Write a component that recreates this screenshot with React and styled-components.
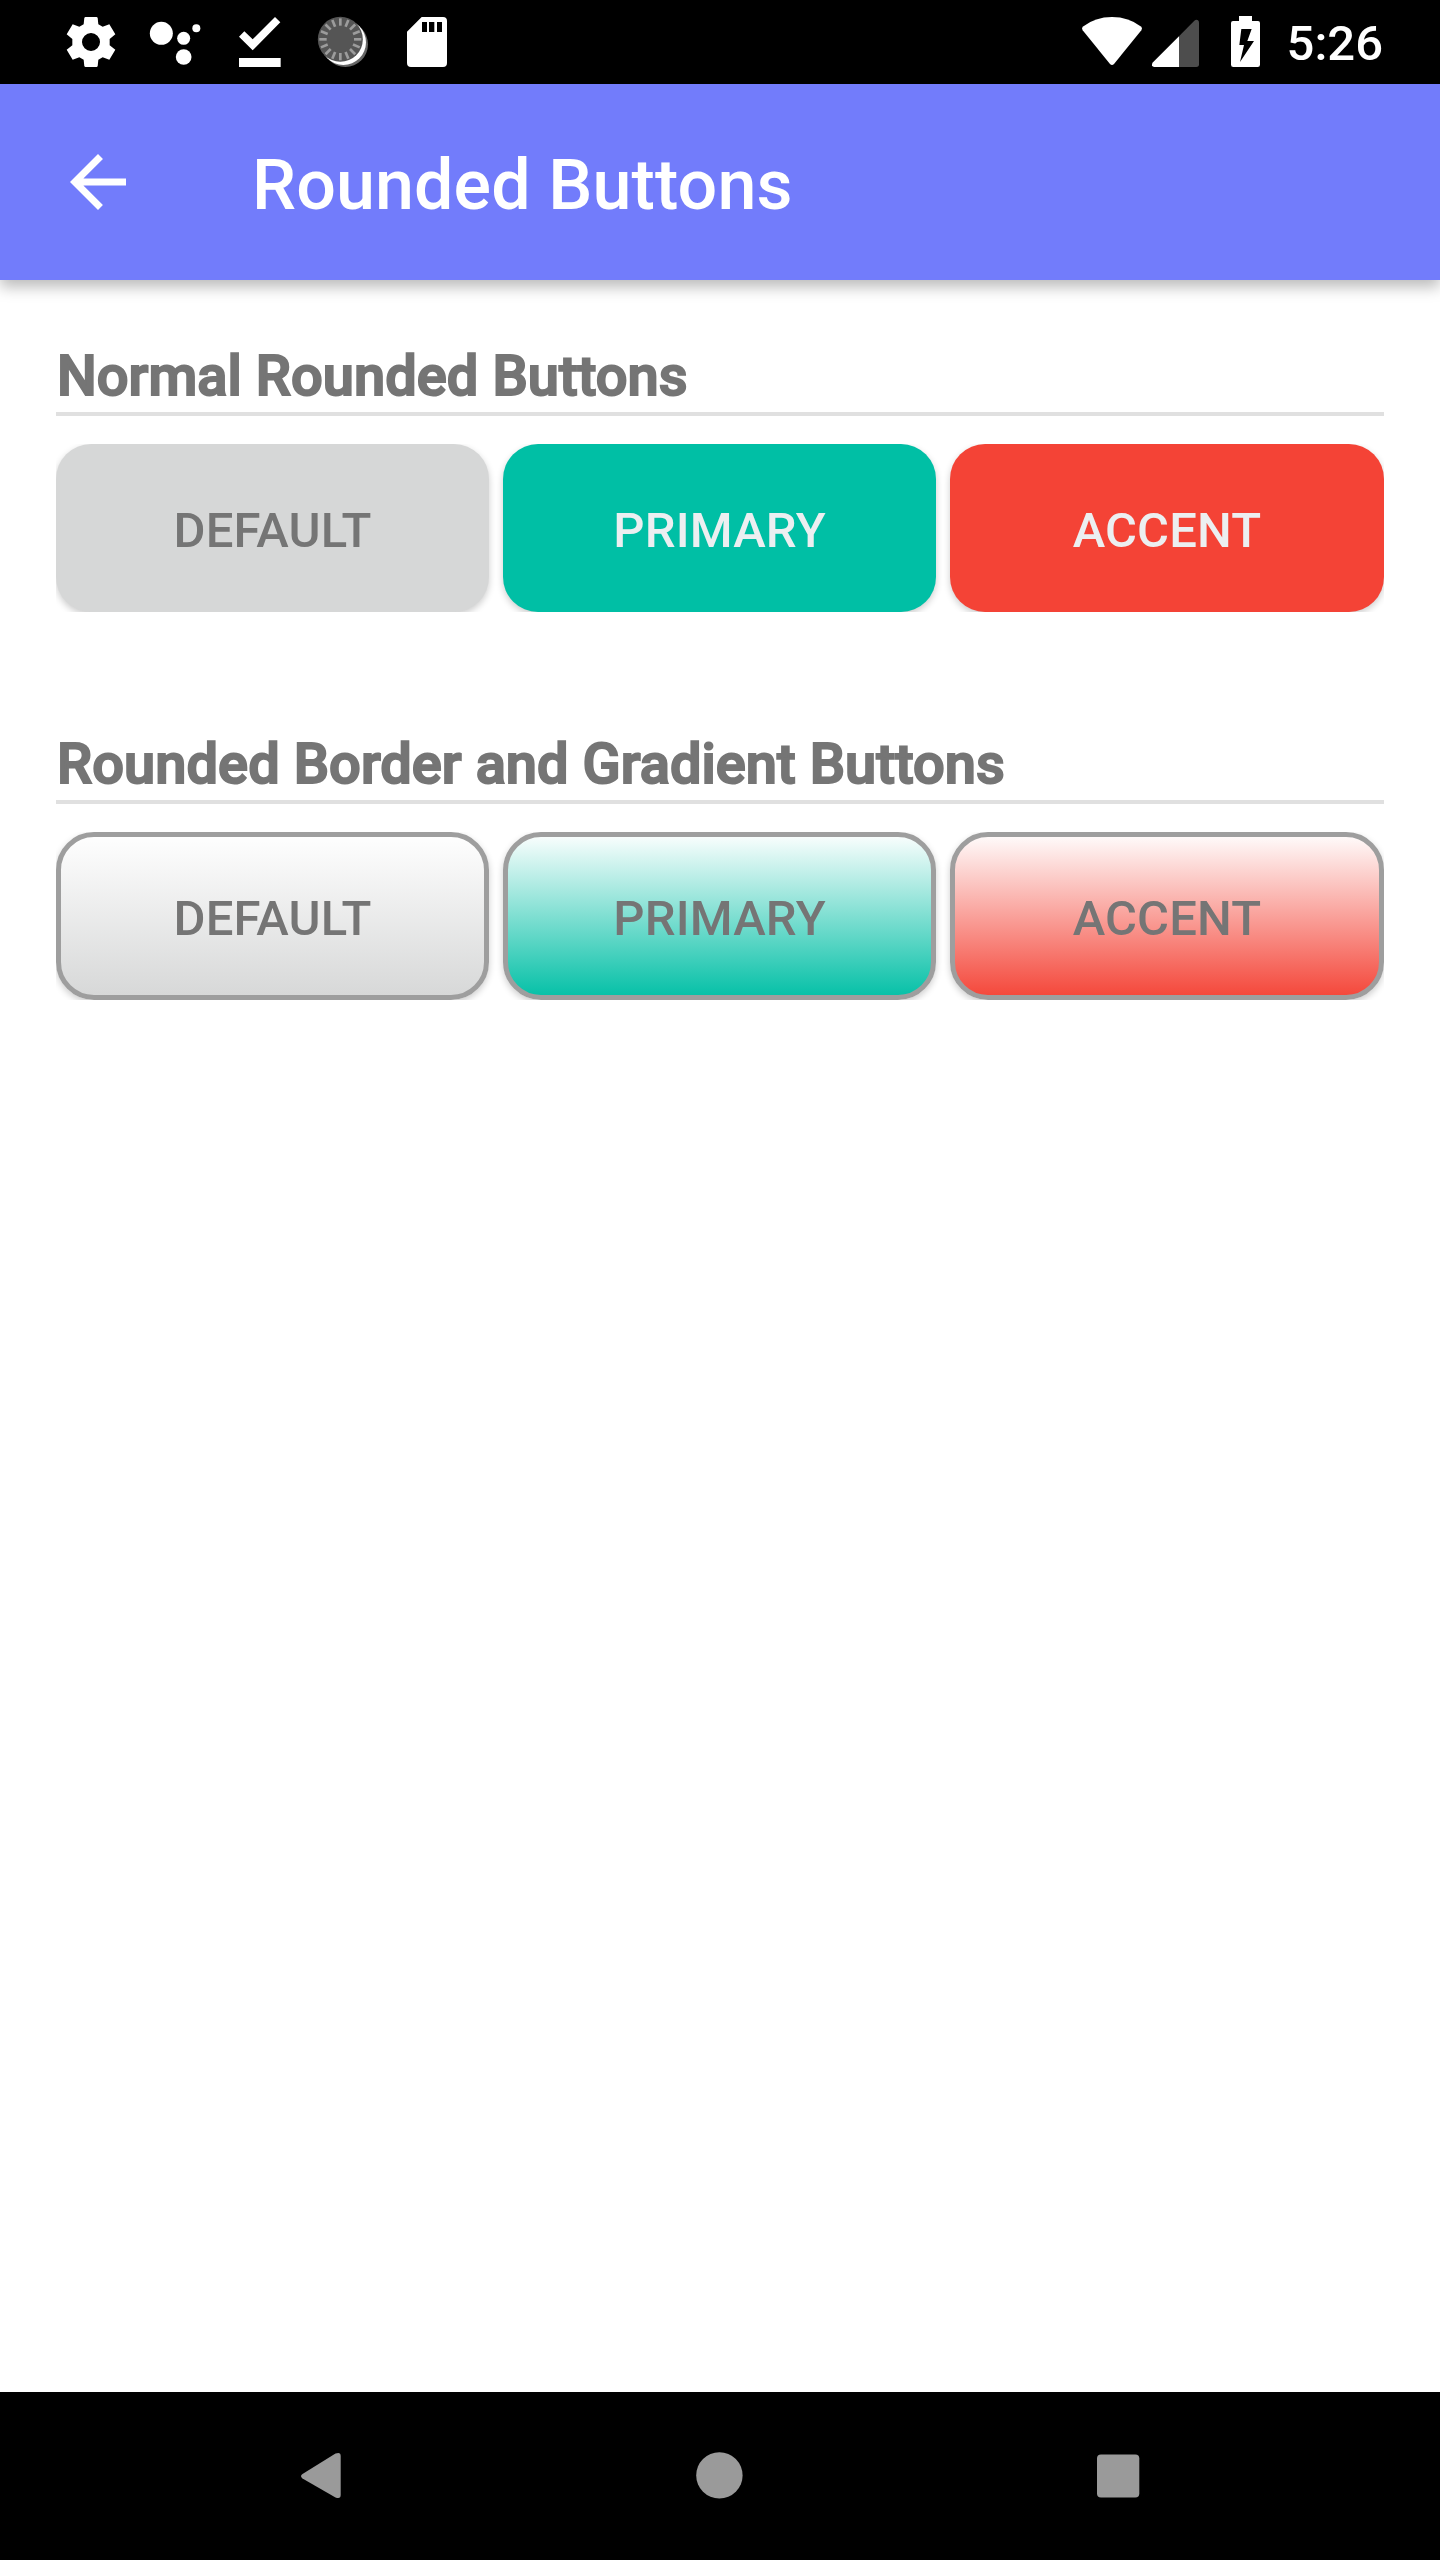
import React from "react";
import styled, { createGlobalStyle } from "styled-components";

const GlobalStyle = createGlobalStyle`
  * { box-sizing: border-box; }
  html, body { margin: 0; padding: 0; background: #fff; }
  body { font-family: Roboto, "Noto Sans", sans-serif; }
`;

const Screen = styled.div`
  width: 1440px;
  height: 2560px;
  display: flex;
  flex-direction: column;
  background: #fff;
  overflow: hidden;
`;

const StatusBar = styled.header`
  height: 84px;
  flex: none;
  display: flex;
  justify-content: space-between;
  padding: 0 57px 0 49px;
  background: #000;
`;

const StatusGroup = styled.div`
  display: flex;
  align-items: center;
`;

const StatusIcon = styled.svg`
  display: block;
  height: 84px;
  width: ${(p) => p.$width || 84}px;
  margin-right: ${(p) => p.$gap || 0}px;
  fill: #fff;
`;

const Clock = styled.span`
  color: #fff;
  font-size: 49px;
  font-weight: 500;
  line-height: 58px;
  padding-top: 4px;
`;

const AppBar = styled.div`
  height: 196px;
  flex: none;
  display: flex;
  align-items: center;
  gap: 112px;
  padding: 0 56px;
  background: #727cfb;
  box-shadow: 0 7px 14px rgba(0, 0, 0, 0.27);
`;

const BackIcon = styled.svg`
  width: 84px;
  height: 84px;
  fill: #fff;
`;

const Title = styled.h1`
  margin: 0;
  padding-top: 6px;
  color: #fff;
  font-size: 70px;
  font-weight: 500;
  line-height: 82px;
  letter-spacing: 0.1px;
`;

const Content = styled.main`
  flex: 1;
  display: flex;
  flex-direction: column;
  gap: 118px;
  padding: 62px 56px 0;
`;

const Section = styled.section`
  display: flex;
  flex-direction: column;
`;

const Heading = styled.h2`
  margin: 0;
  height: 74px;
  padding: 1px 0 0 1px;
  border-bottom: 4px solid #e0e0e0;
  color: #757575;
  font-size: 56px;
  font-weight: 500;
  line-height: 66px;
  letter-spacing: 0.04px;
  -webkit-text-stroke: 2px #757575;
`;

const ButtonRow = styled.div`
  margin-top: 28px;
  display: grid;
  grid-template-columns: 433px 433px 1fr;
  gap: 14px;
  overflow: hidden;
`;

const Button = styled.button`
  height: 168px;
  padding: 5px 0 0;
  border: ${(p) => (p.$outlined ? "5px solid #9e9e9e" : "0")};
  border-radius: ${(p) => (p.$outlined ? 38 : 35)}px;
  background: ${(p) => p.$fill};
  background-origin: border-box;
  box-shadow: 0 3px 7px rgba(0, 0, 0, 0.2);
  color: ${(p) => p.$ink || "#757575"};
  font-family: inherit;
  font-size: 49px;
  font-weight: 500;
  line-height: 58px;
  letter-spacing: 0.15px;
  text-transform: uppercase;
`;

const NavBar = styled.nav`
  height: 168px;
  flex: none;
  display: flex;
  justify-content: center;
  align-items: center;
  background: #000;
`;

const NavItem = styled.div`
  width: 398px;
  display: flex;
  justify-content: center;
`;

const NavIcon = styled.svg`
  display: block;
  width: 84px;
  height: 84px;
  fill: #9a9a9a;
`;

const SECTIONS = [
  {
    title: "Normal Rounded Buttons",
    outlined: false,
    buttons: [
      { label: "Default", fill: "#d6d7d7" },
      { label: "Primary", fill: "#00bfa5", ink: "#eceff1" },
      { label: "Accent", fill: "#f44336", ink: "#eceff1" },
    ],
  },
  {
    title: "Rounded Border and Gradient Buttons",
    outlined: true,
    buttons: [
      { label: "Default", fill: "linear-gradient(#fff, #d6d7d7)" },
      { label: "Primary", fill: "linear-gradient(#fff, #00bfa5)" },
      { label: "Accent", fill: "linear-gradient(#fff, #f44336)" },
    ],
  },
];

const TICKS = Array.from({ length: 16 }, (_, i) => i * 22.5);

export default function App() {
  return (
    <>
      <GlobalStyle />
      <Screen>
        <StatusBar>
          <StatusGroup>
            <StatusIcon viewBox="27 0 252 252">
              <path
                fillRule="evenodd"
                d="M136 51H170L173 53L175 73L188 80L208 73L226 103L209 117V136L226 149L208 179L188 172L175 179L173 199L170 201H136L133 199L131 179L118 172L98 179L80 149L97 136V117L80 103L98 73L118 80L131 73L133 53ZM153 99a27 27 0 1 0 0 54a27 27 0 1 0 0-54Z"
              />
            </StatusIcon>
            <StatusIcon viewBox="279 0 252 252">
              <circle cx="364" cy="100" r="34.5" />
              <circle cx="431" cy="115" r="19.5" />
              <circle cx="469" cy="85" r="12" />
              <circle cx="431" cy="171" r="23.5" />
            </StatusIcon>
            <StatusIcon viewBox="-9 0 252 252">
              <path d="M57 110L73 94L98 118L165 51L181 67L98 151ZM57 174H182V201H57Z" />
            </StatusIcon>
            <StatusIcon viewBox="243 0 252 252">
              <circle cx="376" cy="133" r="68" fill="#666" />
              <circle cx="370" cy="127" r="68" />
              <circle cx="361" cy="118" r="67.5" fill="#555" />
              {TICKS.map((a) => (
                <path
                  key={a}
                  d="M361 55V77"
                  stroke="#9c9c9c"
                  strokeWidth="8"
                  transform={`rotate(${a} 361 118)`}
                />
              ))}
            </StatusIcon>
            <StatusIcon viewBox="495 0 252 252">
              <path
                fillRule="evenodd"
                d="M605 51H669Q681 51 681 63V189Q681 201 669 201H573Q561 201 561 189V95ZM606 66V96H621V66ZM627 66V96H643V66ZM651 66V96H666V66Z"
              />
            </StatusIcon>
          </StatusGroup>
          <StatusGroup>
            <StatusIcon viewBox="60 0 192 252" $width={64} $gap={6}>
              <path d="M68 80Q106 51 156 51T244 80Q248 85 244 91L162 192Q156 198 150 192L68 91Q64 85 68 80Z" />
            </StatusIcon>
            <StatusIcon viewBox="270 0 153 252" $width={51} $gap={28}>
              <path
                fill="#4d4d4d"
                d="M357 109L403 62Q409 57 414 61Q417 64 417 68V193Q417 201 409 201H357Z"
              />
              <path d="M357 109V201H283Q277 201 276 196Q275 191 279 187Z" />
            </StatusIcon>
            <StatusIcon viewBox="507 0 99 252" $width={33} $gap={25}>
              <path
                fillRule="evenodd"
                d="M537 48H576V63H594Q600 63 600 69V194Q600 201 593 201H520Q513 201 513 194V69Q513 63 519 63H537ZM544 87L538 135H552L540 186L582 123H562L575 87Z"
              />
            </StatusIcon>
            <Clock>5:26</Clock>
          </StatusGroup>
        </StatusBar>

        <AppBar>
          <BackIcon viewBox="0 0 24 24">
            <path d="M20 11H7.83l5.59-5.59L12 4l-8 8 8 8 1.41-1.41L7.83 13H20v-2z" />
          </BackIcon>
          <Title>Rounded Buttons</Title>
        </AppBar>

        <Content>
          {SECTIONS.map((section) => (
            <Section key={section.title}>
              <Heading>{section.title}</Heading>
              <ButtonRow>
                {section.buttons.map((b) => (
                  <Button
                    key={b.label}
                    $fill={b.fill}
                    $ink={b.ink}
                    $outlined={section.outlined}
                  >
                    {b.label}
                  </Button>
                ))}
              </ButtonRow>
            </Section>
          ))}
        </Content>

        <NavBar>
          <NavItem>
            <NavIcon viewBox="0 0 84 84">
              <path d="M22.5 40L55.5 19.6Q60.7 17.5 60.7 22V61Q60.7 65.5 55.5 63.4L22.5 44.5Q19.5 42 22.5 40Z" />
            </NavIcon>
          </NavItem>
          <NavItem>
            <NavIcon viewBox="0 0 84 84">
              <circle cx="41.4" cy="41.4" r="23.2" />
            </NavIcon>
          </NavItem>
          <NavItem>
            <NavIcon viewBox="0 0 84 84">
              <rect x="21" y="20.5" width="42.3" height="43" rx="4" />
            </NavIcon>
          </NavItem>
        </NavBar>
      </Screen>
    </>
  );
}
